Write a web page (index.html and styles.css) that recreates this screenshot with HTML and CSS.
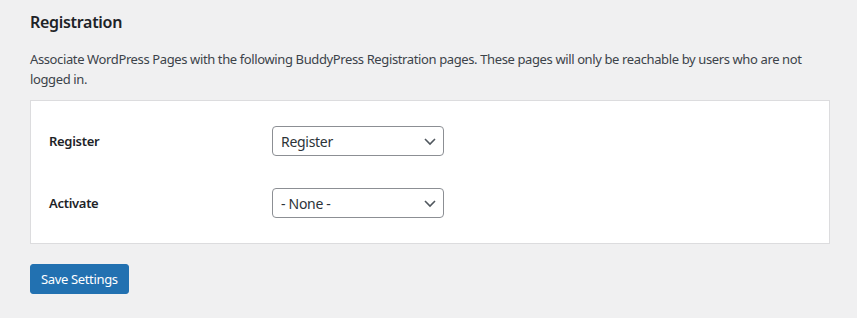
FILE: index.html
```html
<!DOCTYPE html>
<html lang="en">
<head>
  <meta charset="UTF-8" />
  <title>Registration</title>
  <link rel="stylesheet" href="styles.css">
</head>
<body>

<div class="wrap">
  <h2 class="section-title">Registration</h2>
  <p class="section-desc">Associate WordPress Pages with the following BuddyPress Registration pages. These pages will only be reachable by users who are not logged in.</p>

  <div class="settings-card">
    <div class="field-row">
      <label class="field-label" for="pageRegister">Register</label>
      <div class="select-box">
        <select id="pageRegister">
          <option>Register</option>
        </select>
        <svg class="chevron" viewBox="0 0 20 20" width="20" height="20"><path d="M5 8l5 5 5-5" fill="none" stroke="#50575e" stroke-width="1.6"/></svg>
      </div>
    </div>
    <div class="field-row">
      <label class="field-label" for="pageActivate">Activate</label>
      <div class="select-box">
        <select id="pageActivate">
          <option>- None -</option>
        </select>
        <svg class="chevron" viewBox="0 0 20 20" width="20" height="20"><path d="M5 8l5 5 5-5" fill="none" stroke="#50575e" stroke-width="1.6"/></svg>
      </div>
    </div>
  </div>

  <button class="button-primary">Save Settings</button>
</div>

</body>
</html>
```

FILE: styles.css
```css
body {
  margin: 0;
  background: #f0f0f1;
  color: #3c434a;
  font-family: "Noto Sans", "Open Sans", sans-serif;
  font-size: 13px;
  letter-spacing: -0.3px;
  line-height: 1.4em;
}

.wrap {
  padding: 0 27px 0 30px;
}

.section-title {
  margin: 0;
  padding-top: 10px;
  font-size: 16px;
  font-weight: 600;
  line-height: 24px;
  color: #1d2327;
}

.section-desc {
  margin: 15px 0 11px;
  line-height: 20px;
  letter-spacing: -0.38px;
}

.settings-card {
  background: #fff;
  border: 1px solid #dcdcde;
  padding: 9px 18px 9px;
}

.field-row {
  display: flex;
  align-items: center;
  padding: 16px 0;
}

.field-label {
  width: 223px;
  font-weight: 600;
  color: #1d2327;
}

.select-box {
  position: relative;
  width: 172px;
  height: 30px;
}

.select-box select {
  appearance: none;
  width: 100%;
  height: 100%;
  box-sizing: border-box;
  border: 1px solid #8c8f94;
  border-radius: 4px;
  background: #fff;
  color: #2c3338;
  font-family: inherit;
  font-size: 14px;
  letter-spacing: -0.3px;
  padding: 0 24px 0 8px;
  margin: 0;
}

.chevron {
  position: absolute;
  right: 4px;
  top: 5px;
  pointer-events: none;
}

.button-primary {
  margin-top: 20px;
  height: 30px;
  padding: 0 10px;
  background: #2271b1;
  border: 1px solid #2271b1;
  border-radius: 3px;
  color: #fff;
  font-family: inherit;
  font-size: 13px;
  letter-spacing: -0.35px;
  cursor: pointer;
}
```
